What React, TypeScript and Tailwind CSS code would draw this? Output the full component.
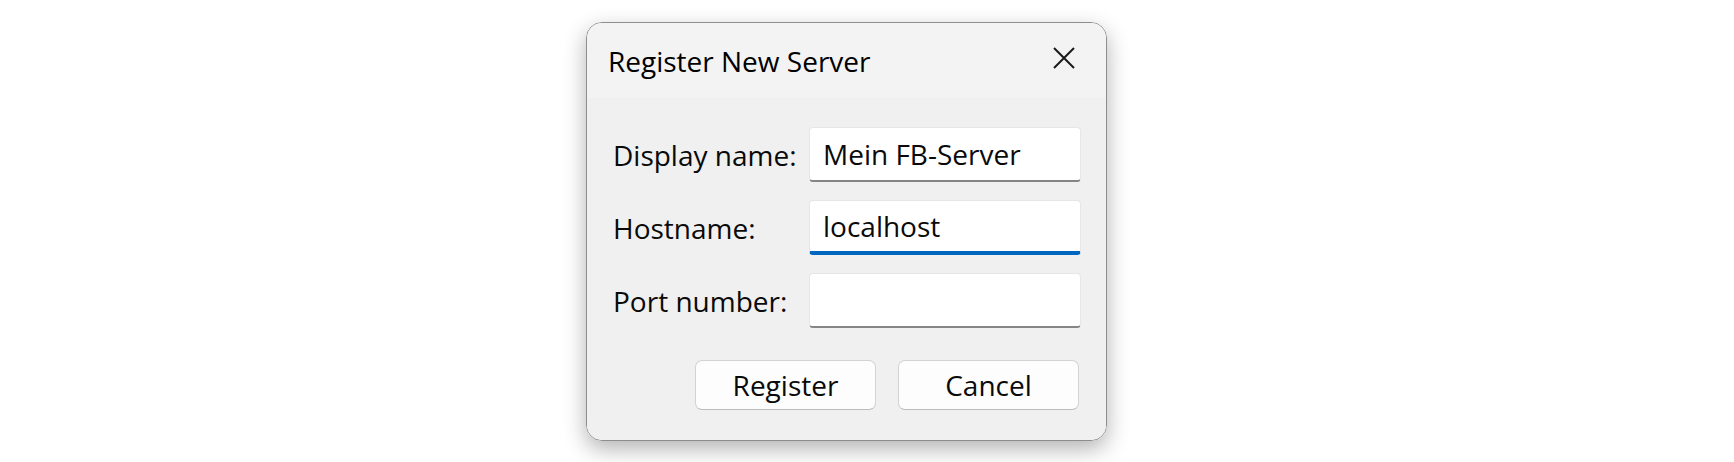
import React from "react";

const font = { fontFamily: '"Open Sans", "Noto Sans", sans-serif' };

function Field({ label, value, focused }: { label: string; value: string; focused?: boolean }) {
  return (
    <>
      <div className="flex h-[55px] items-center text-[28px] leading-none text-[#0a0a0a]">{label}</div>
      <div
        className={
          "flex h-[55px] items-center rounded-[4px] border border-[#e6e6e6] bg-white pl-[13px] text-[28px] leading-none text-[#0a0a0a] " +
          (focused ? "border-b-[4px] border-b-[#0067c0]" : "border-b-[2px] border-b-[#858585]")
        }
      >
        {value}
      </div>
    </>
  );
}

export default function App() {
  return (
    <div className="h-[462px] w-[1734px] bg-white pl-[586px] pt-[22px]" style={font}>
      <div className="flex h-[419px] w-[521px] flex-col overflow-hidden rounded-[16px] border border-[#8e8e8e] shadow-[0_8px_22px_rgba(0,0,0,0.3)]">
        <div className="flex h-[75px] items-center justify-between bg-[#f3f3f3] pl-[21px] pr-[31px]">
          <span className="text-[28px] leading-none text-[#000]">Register New Server</span>
          <svg width="22" height="22" viewBox="0 0 22 22" className="-mt-[6px]">
            <path d="M1 1 L21 21 M21 1 L1 21" stroke="#1a1a1a" strokeWidth="2" fill="none" />
          </svg>
        </div>
        <div className="flex flex-1 flex-col bg-[#f0f0f0] pl-[26px] pr-[25px] pt-[29px]">
          <div className="grid grid-cols-[196px_272px] gap-y-[18px]">
            <Field label="Display name:" value="Mein FB-Server" />
            <Field label="Hostname:" value="localhost" focused />
            <Field label="Port number:" value="" />
          </div>
          <div className="mt-[32px] flex justify-end gap-[22px] pr-[2px]">
            <button className="flex h-[50px] w-[181px] items-center justify-center rounded-[7px] border border-[#d3d3d3] border-b-[#bcbcbc] bg-[#fdfdfd] text-[28px] leading-none text-[#0a0a0a]">
              Register
            </button>
            <button className="flex h-[50px] w-[181px] items-center justify-center rounded-[7px] border border-[#d3d3d3] border-b-[#bcbcbc] bg-[#fdfdfd] text-[28px] leading-none text-[#0a0a0a]">
              Cancel
            </button>
          </div>
        </div>
      </div>
    </div>
  );
}
